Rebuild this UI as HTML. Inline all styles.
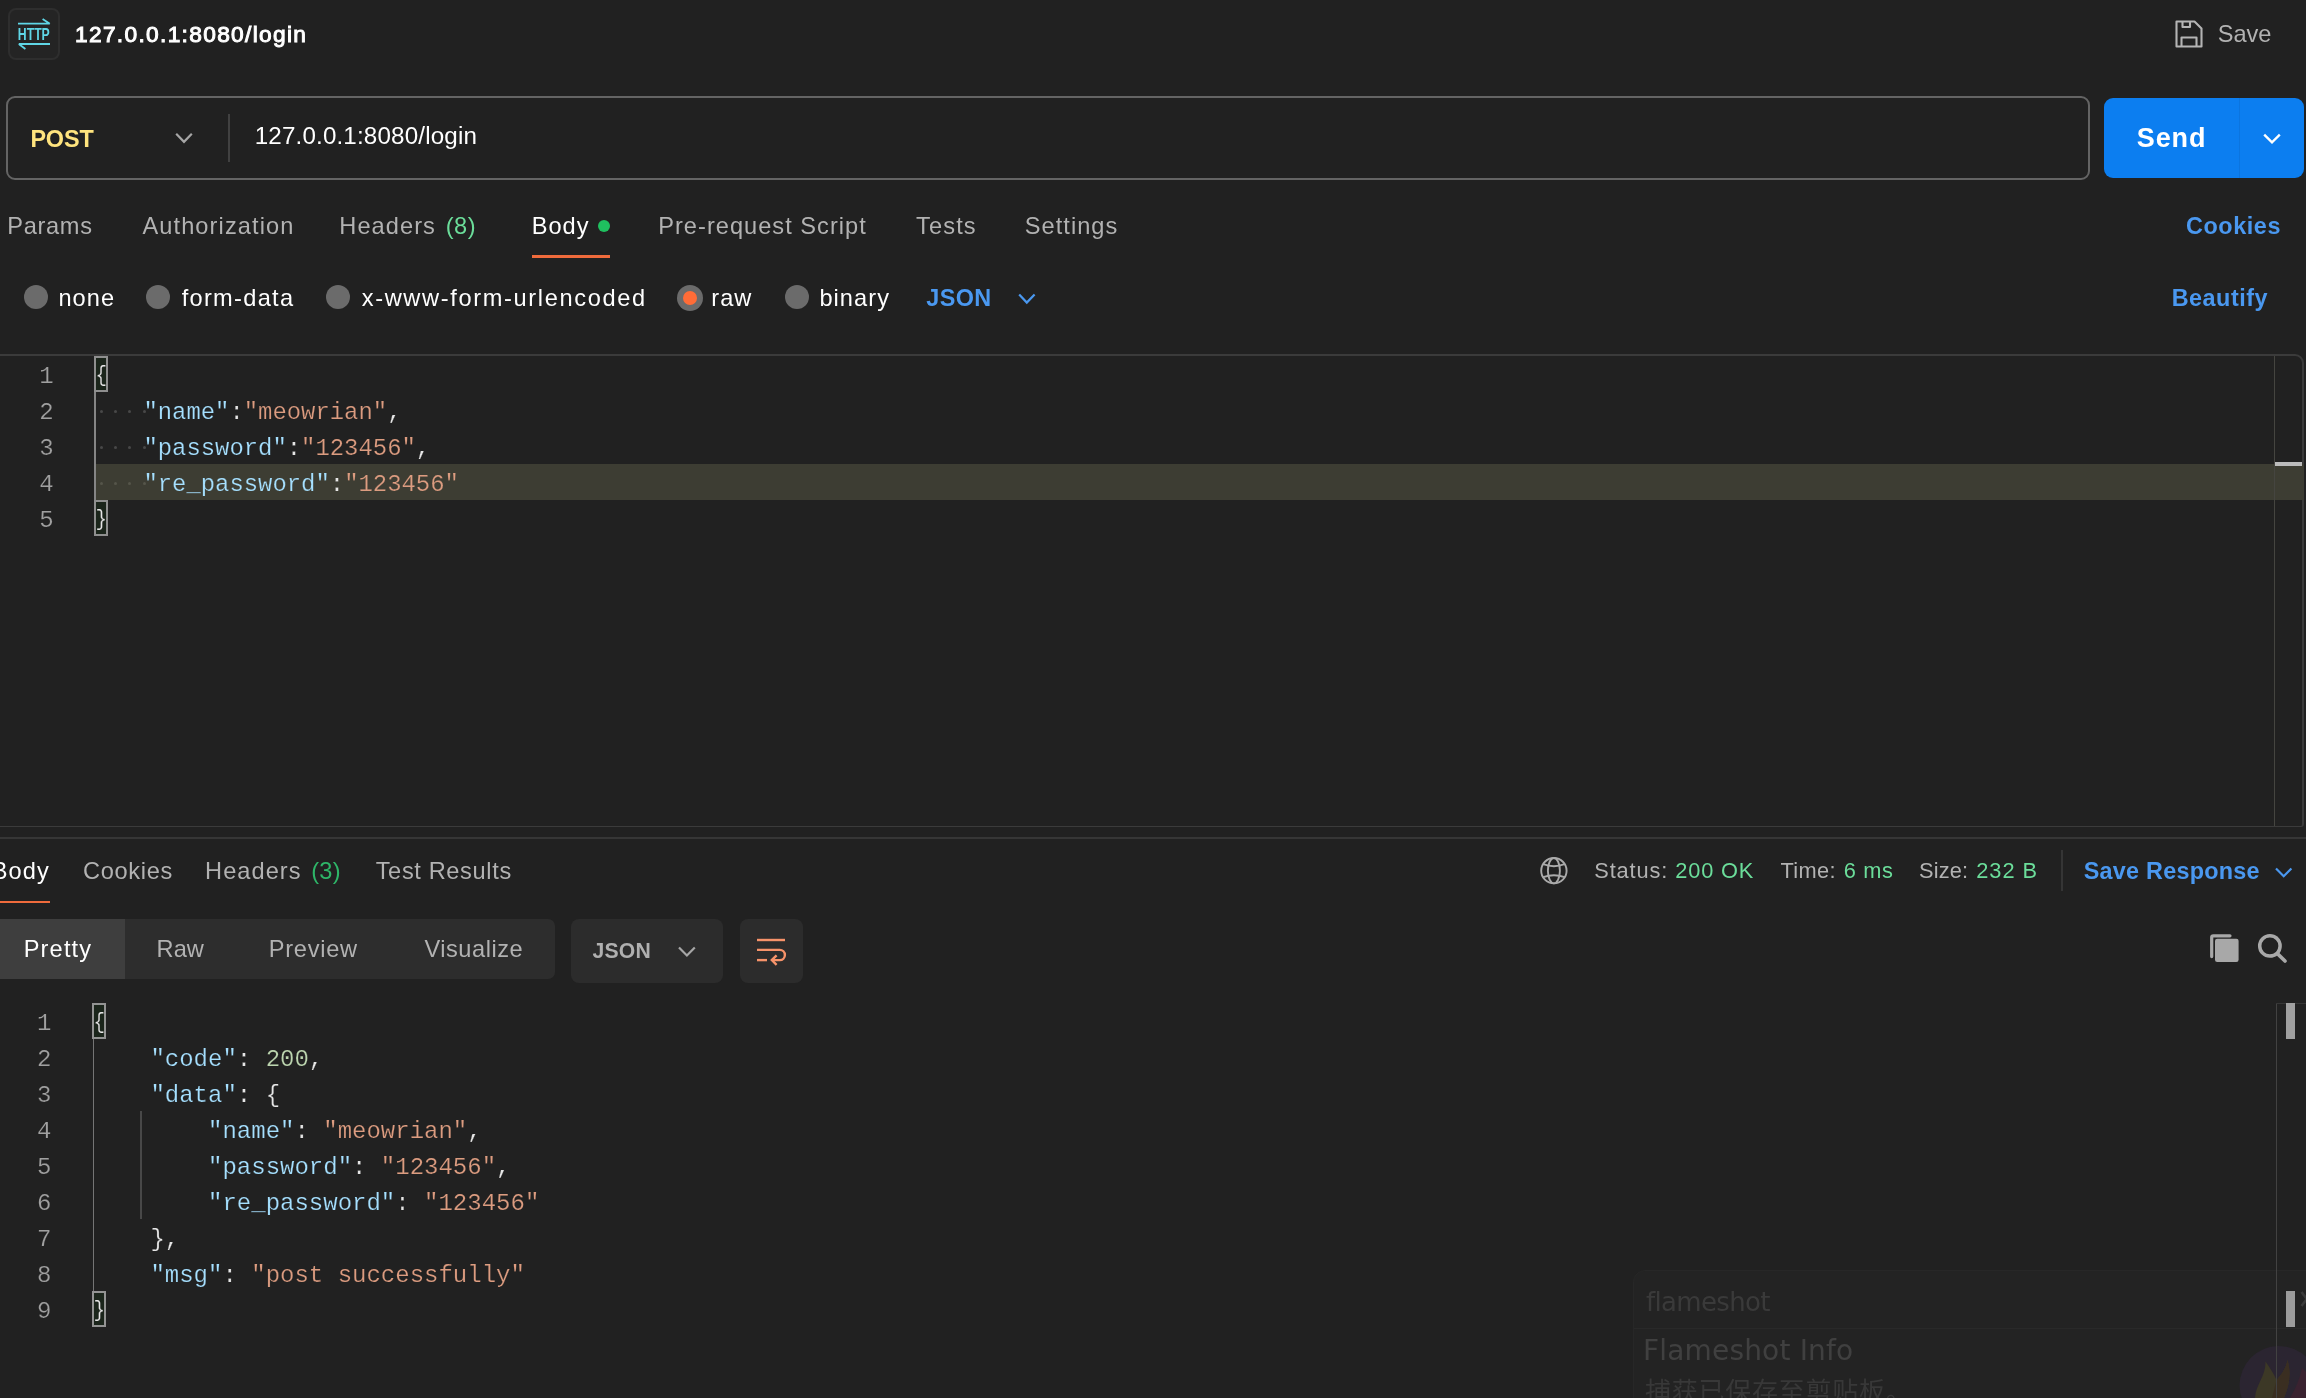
<!DOCTYPE html>
<html lang="en">
<head>
<meta charset="utf-8">
<title>Postman - 127.0.0.1:8080/login</title>
<style>
*{box-sizing:border-box;margin:0;padding:0}
html,body{width:2306px;height:1398px;overflow:hidden;background:#212121}
body{position:relative;font-family:'Liberation Sans',sans-serif;color:#fff}
.a{position:absolute}
.t{position:absolute;white-space:pre}
.m{position:absolute;white-space:pre;font:24px/24px 'Liberation Mono',monospace;color:#e6e6e6;-webkit-text-stroke:.22px #212121}
.ln{position:absolute;white-space:pre;font:24px/24px 'Liberation Mono',monospace;color:#a0a0a0;text-align:right;-webkit-text-stroke:.22px #212121}
.br{transform:translateY(-1.3px) scale(.8,.93);transform-origin:50% 62%}
.rq{font-size:23.9px}
.k{color:#a6e0ff}.s{color:#dc9c80}.n{color:#bdd6b0}
.hl,.hl span{-webkit-text-stroke-color:#3d3d33}
.radio{position:absolute;width:24px;height:24px;border-radius:50%;background:#6b6b6b}
.dot{position:absolute;width:3px;height:3px;border-radius:50%;background:#484848}
svg{position:absolute;overflow:visible}
</style>
</head>
<body>
<div id="root" style="position:absolute;left:0;top:0;width:2306px;height:1398px;will-change:transform">

<!-- ===== header ===== -->
<div class="a" style="left:8px;top:8px;width:52.4px;height:52.4px;border-radius:8px;background:#242424;border:2.2px solid #2e2e2e"></div>
<svg style="left:8px;top:8px" width="52" height="52" viewBox="8 8 52 52">
  <g fill="none" stroke="#5fd6e6" stroke-width="1.8" stroke-linecap="butt">
    <path d="M18 23.7 H49.8 M42.6 18.9 L49.8 23.7"/>
    <path d="M18.8 44 H50 M18.8 44 L25.4 49"/>
  </g>
  <text x="17.8" y="40.1" font-family="'Liberation Sans',sans-serif" font-size="17" font-weight="bold" fill="#5fd6e6" textLength="32" lengthAdjust="spacingAndGlyphs">HTTP</text>
</svg>

<!-- save icon -->
<svg style="left:2175px;top:20px" width="28" height="28" viewBox="0 0 28 28">
  <g fill="none" stroke="#b4b4b4" stroke-width="2.1" stroke-linejoin="round">
    <path d="M1.5 1.5 H19.5 L26.5 8.5 V26.5 H1.5 Z"/>
    <path d="M7.5 1.5 V7 H15 V1.5"/>
    <path d="M6.5 26.5 V17.5 H21.5 V26.5"/>
  </g>
</svg>

<!-- ===== URL bar ===== -->
<div class="a" style="left:6px;top:96px;width:2084px;height:84px;border:2px solid #646464;border-radius:9px"></div>
<svg style="left:175px;top:132px" width="18" height="12" viewBox="0 0 18 12"><path d="M1.2 1.8 L9 9.8 L16.8 1.8" fill="none" stroke="#a6a6a6" stroke-width="2.2"/></svg>
<div class="a" style="left:228.2px;top:114px;width:1.7px;height:48px;background:#414141"></div>

<!-- send button -->
<div class="a" style="left:2104px;top:98px;width:200px;height:80px;border-radius:9px;background:#0c7ef0"></div>
<div class="a" style="left:2239px;top:98px;width:1.3px;height:80px;background:#0b75e0"></div>
<svg style="left:2263px;top:133px" width="18" height="12" viewBox="0 0 18 12"><path d="M1.2 1.6 L9 9.4 L16.8 1.6" fill="none" stroke="#fff" stroke-width="2.4"/></svg>

<!-- ===== request tabs ===== -->
<div class="a" style="left:598px;top:220.3px;width:12px;height:12px;border-radius:50%;background:#1fc05f"></div>
<div class="a" style="left:532px;top:255.4px;width:78px;height:2.6px;background:#f06b3c"></div>

<!-- body type radios -->
<div class="radio" style="left:24px;top:285px"></div>
<div class="radio" style="left:146px;top:285px"></div>
<div class="radio" style="left:325.7px;top:285px"></div>
<div class="radio" style="left:677px;top:285.2px;width:26px;height:26px"></div>
<div class="a" style="left:683px;top:291.2px;width:14px;height:14px;border-radius:50%;background:#ff6c37"></div>
<div class="radio" style="left:784.8px;top:285px"></div>
<svg style="left:1018px;top:293px" width="18" height="12" viewBox="0 0 18 12"><path d="M1.2 1.4 L8.8 9.6 L16.6 1.4" fill="none" stroke="#4a98f0" stroke-width="2.2"/></svg>

<!-- ===== request editor ===== -->
<div class="a" style="left:-4px;top:354px;width:2308px;height:473.2px;border:2px solid #3b3b3b;border-bottom-width:1.3px;border-radius:0 9px 3px 0"></div>
<!-- current line highlight -->
<div class="a" style="left:96px;top:464.1px;width:2207.5px;height:35.7px;background:#3d3d33"></div>
<div class="a" style="left:2274px;top:356px;width:1.2px;height:470px;background:#454540"></div>
<div class="a" style="left:2275.2px;top:462.4px;width:26.6px;height:3.6px;background:#bcbcbc"></div>
<!-- bracket boxes and guide -->
<div class="a" style="left:94.2px;top:357px;width:2px;height:178px;background:#858585"></div>
<div class="a" style="left:94.2px;top:356.2px;width:13.7px;height:35.8px;border:2px solid #8f8f8f;background:#1b251b"></div>
<div class="a" style="left:94.2px;top:500.2px;width:13.7px;height:35.8px;border:2px solid #8f8f8f;background:#1b251b"></div>
<!-- whitespace dots -->
<div class="dot" style="left:99.5px;top:409.5px"></div><div class="dot" style="left:114.1px;top:409.5px"></div><div class="dot" style="left:128.4px;top:409.5px"></div><div class="dot" style="left:142.6px;top:409.5px"></div>
<div class="dot" style="left:99.5px;top:445.5px"></div><div class="dot" style="left:114.1px;top:445.5px"></div><div class="dot" style="left:128.4px;top:445.5px"></div><div class="dot" style="left:142.6px;top:445.5px"></div>
<div class="dot" style="left:99.5px;top:481.5px;background:#55554a"></div><div class="dot" style="left:114.1px;top:481.5px;background:#55554a"></div><div class="dot" style="left:128.4px;top:481.5px;background:#55554a"></div><div class="dot" style="left:142.6px;top:481.5px;background:#55554a"></div>
<!-- line numbers -->
<div class="ln" style="left:10px;width:43.6px;top:365.2px">1</div>
<div class="ln" style="left:10px;width:43.6px;top:401.2px">2</div>
<div class="ln" style="left:10px;width:43.6px;top:437.2px">3</div>
<div class="ln" style="left:10px;width:43.6px;top:473.2px">4</div>
<div class="ln" style="left:10px;width:43.6px;top:509.2px">5</div>
<!-- code -->
<div class="m br" style="left:93.8px;top:365.2px">{</div>
<div class="m rq" style="left:143.4px;top:401.2px"><span class="k">"name"</span>:<span class="s">"meowrian"</span>,</div>
<div class="m rq" style="left:143.4px;top:437.2px"><span class="k">"password"</span>:<span class="s">"123456"</span>,</div>
<div class="m rq hl" style="left:143.4px;top:473.2px"><span class="k">"re_password"</span>:<span class="s">"123456"</span></div>
<div class="m br" style="left:93.8px;top:509.2px">}</div>

<!-- ===== response pane ===== -->
<div class="a" style="left:0;top:837.1px;width:2306px;height:1.8px;background:#363636"></div>
<div class="a" style="left:0;top:900.6px;width:49.8px;height:2.7px;background:#f06b3c"></div>

<!-- globe -->
<svg style="left:1539px;top:856px" width="30" height="30" viewBox="0 0 30 30">
  <g fill="none" stroke="#aaaaaa" stroke-width="1.9">
    <circle cx="14.9" cy="14.7" r="12.7"/>
    <ellipse cx="14.9" cy="14.7" rx="6" ry="12.7"/>
    <path d="M4.2 8.2 Q14.9 12.2 25.6 8.2 M4.2 21.2 Q14.9 17.2 25.6 21.2"/>
  </g>
</svg>
<div class="a" style="left:2061px;top:850px;width:1.6px;height:41px;background:#353535"></div>
<svg style="left:2275px;top:866.5px" width="18" height="12" viewBox="0 0 18 12"><path d="M1 1.4 L8.7 9.2 L16.4 1.4" fill="none" stroke="#4a98f0" stroke-width="2.2"/></svg>

<!-- view tabs -->
<div class="a" style="left:-10px;top:919px;width:565px;height:60px;border-radius:7px;background:#2d2d2d"></div>
<div class="a" style="left:0;top:919px;width:125px;height:60px;background:#3e3e3e"></div>
<div class="a" style="left:571px;top:919px;width:152.4px;height:64.4px;border-radius:8px;background:#2c2c2c"></div>
<svg style="left:678px;top:946px" width="18" height="12" viewBox="0 0 18 12"><path d="M1 1.4 L8.9 9.4 L16.8 1.4" fill="none" stroke="#a6a6a6" stroke-width="2.2"/></svg>
<div class="a" style="left:739.6px;top:919px;width:63.4px;height:64.4px;border-radius:8px;background:#2c2c2c"></div>
<svg style="left:755px;top:936px" width="34" height="32" viewBox="755 936 34 32">
  <g fill="none" stroke="#f7936a" stroke-width="2.4">
    <path d="M757 940 H785"/>
    <path d="M757 949.9 H779.8 A5.1 5.1 0 0 1 779.8 960.1 H773"/>
    <path d="M757 960.1 H767"/>
    <path d="M776.6 955.3 L771.8 960.1 L776.6 964.9"/>
  </g>
</svg>

<!-- copy + search -->
<svg style="left:2208px;top:932px" width="32" height="32" viewBox="2208 932 32 32">
  <path d="M2230 935.8 H2213.4 Q2211.7 935.8 2211.7 937.5 V956.6" fill="none" stroke="#a8a8a8" stroke-width="3.2" stroke-linecap="round"/>
  <rect x="2215" y="938.8" width="23.6" height="23.2" rx="2.2" fill="#a8a8a8"/>
</svg>
<svg style="left:2256px;top:932px" width="32" height="32" viewBox="2256 932 32 32">
  <circle cx="2269.9" cy="945.9" r="10.2" fill="none" stroke="#a8a8a8" stroke-width="3.5"/>
  <path d="M2277.4 953.6 L2285 961" stroke="#a8a8a8" stroke-width="3.6" stroke-linecap="round"/>
</svg>

<!-- flameshot notification (faded) -->
<div class="a" style="left:1633px;top:1270px;width:700px;height:160px;border-radius:12px;background:#232323;border:1px solid #272727"></div>
<div class="a" style="left:1634px;top:1328.2px;width:672px;height:1.2px;background:#292929"></div>
<svg style="left:2239px;top:1346px" width="80" height="80" viewBox="2239 1346 80 80">
  <circle cx="2279" cy="1385.5" r="39.5" fill="#2b2531"/>
  <path d="M2255 1398 C2256 1384 2266 1376 2265.5 1361.5 C2270 1368 2274 1374 2276.5 1380 C2282 1374 2286 1368 2287.5 1360 C2291 1372 2290 1384 2284 1398 Z" fill="#3c3826"/>
  <path d="M2276.5 1380 C2282 1374 2286 1368 2287.5 1360 C2291 1372 2290 1384 2284 1398 H2272 Z" fill="#3a2e21"/>
  <path d="M2290 1398 C2296 1388 2300 1378 2302 1368 L2306 1372 V1398 Z" fill="#3a2230"/>
</svg>
<svg style="left:2300px;top:1290px" width="10" height="18" viewBox="2300 1290 10 18"><path d="M2301.5 1292 L2312 1306 M2301.5 1306 L2312 1292" stroke="#3a3a3a" stroke-width="2.6" fill="none"/></svg>

<!-- response editor -->
<div class="a" style="left:2276px;top:1002.6px;width:1.2px;height:400px;background:#424242"></div>
<div class="a" style="left:2276px;top:1002.6px;width:30px;height:1px;background:#363636"></div>
<div class="a" style="left:2286px;top:1003.2px;width:9.2px;height:36px;background:#a0a0a0"></div>
<div class="a" style="left:2286px;top:1291px;width:9.3px;height:36.2px;background:#9c9c9c"></div>
<div class="a" style="left:92.8px;top:1004px;width:1.4px;height:322px;background:#757575"></div>
<div class="a" style="left:140.4px;top:1111px;width:1.4px;height:108px;background:#484848"></div>
<div class="a" style="left:92.2px;top:1003.3px;width:13.8px;height:35.4px;border:2px solid #939393;background:#1b251b"></div>
<div class="a" style="left:92.2px;top:1291.3px;width:13.8px;height:35.6px;border:2px solid #939393;background:#1b251b"></div>

<div class="ln" style="left:8px;width:43.4px;top:1012.0px">1</div>
<div class="ln" style="left:8px;width:43.4px;top:1048.0px">2</div>
<div class="ln" style="left:8px;width:43.4px;top:1084.0px">3</div>
<div class="ln" style="left:8px;width:43.4px;top:1120.0px">4</div>
<div class="ln" style="left:8px;width:43.4px;top:1156.0px">5</div>
<div class="ln" style="left:8px;width:43.4px;top:1192.0px">6</div>
<div class="ln" style="left:8px;width:43.4px;top:1228.0px">7</div>
<div class="ln" style="left:8px;width:43.4px;top:1264.0px">8</div>
<div class="ln" style="left:8px;width:43.4px;top:1300.0px">9</div>

<div class="m br" style="left:92px;top:1012.0px">{</div>
<div class="m" style="left:92.8px;top:1048.0px">    <span class="k">"code"</span>: <span class="n">200</span>,</div>
<div class="m" style="left:92.8px;top:1084.0px">    <span class="k">"data"</span>: {</div>
<div class="m" style="left:92.8px;top:1120.0px">        <span class="k">"name"</span>: <span class="s">"meowrian"</span>,</div>
<div class="m" style="left:92.8px;top:1156.0px">        <span class="k">"password"</span>: <span class="s">"123456"</span>,</div>
<div class="m" style="left:92.8px;top:1192.0px">        <span class="k">"re_password"</span>: <span class="s">"123456"</span></div>
<div class="m" style="left:92.8px;top:1228.0px">    },</div>
<div class="m" style="left:92.8px;top:1264.0px">    <span class="k">"msg"</span>: <span class="s">"post successfully"</span></div>
<div class="m br" style="left:92px;top:1300.0px">}</div>

<!-- ===== text ===== -->
<span class="t" style="left:75.0px;top:23.0px;font:400 22.7px/22.7px 'Liberation Sans', sans-serif;letter-spacing:1.332px;color:#ffffff;-webkit-text-stroke:1.0px #ffffff">127.0.0.1:8080/login</span>
<span class="t" style="left:2217.7px;top:22.5px;font:400 23.6px/23.6px 'Liberation Sans', sans-serif;letter-spacing:0.000px;color:#b2b2b2">Save</span>
<span class="t" style="left:30.4px;top:127.6px;font:700 23.4px/23.4px 'Liberation Sans', sans-serif;letter-spacing:-0.133px;color:#ffe47e">POST</span>
<span class="t" style="left:254.7px;top:123.7px;font:400 24.2px/24.2px 'Liberation Sans', sans-serif;letter-spacing:0.158px;color:#ffffff">127.0.0.1:8080/login</span>
<span class="t" style="left:2136.7px;top:125.4px;font:700 27px/27px 'Liberation Sans', sans-serif;letter-spacing:0.933px;color:#ffffff">Send</span>
<span class="t" style="left:7.3px;top:215.0px;font:400 23.6px/23.6px 'Liberation Sans', sans-serif;letter-spacing:0.680px;color:#b2b2b2">Params</span>
<span class="t" style="left:142.4px;top:215.0px;font:400 23.6px/23.6px 'Liberation Sans', sans-serif;letter-spacing:1.108px;color:#b2b2b2">Authorization</span>
<span class="t" style="left:339.3px;top:215.0px;font:400 23.6px/23.6px 'Liberation Sans', sans-serif;letter-spacing:1.067px;color:#b2b2b2">Headers</span>
<span class="t" style="left:445.7px;top:215.0px;font:400 23.6px/23.6px 'Liberation Sans', sans-serif;letter-spacing:0.500px;color:#6bdd9a">(8)</span>
<span class="t" style="left:531.7px;top:215.0px;font:400 23.6px/23.6px 'Liberation Sans', sans-serif;letter-spacing:1.000px;color:#ffffff">Body</span>
<span class="t" style="left:658.2px;top:215.0px;font:400 23.6px/23.6px 'Liberation Sans', sans-serif;letter-spacing:1.029px;color:#b2b2b2">Pre-request Script</span>
<span class="t" style="left:916.0px;top:215.0px;font:400 23.6px/23.6px 'Liberation Sans', sans-serif;letter-spacing:1.150px;color:#b2b2b2">Tests</span>
<span class="t" style="left:1024.7px;top:215.0px;font:400 23.6px/23.6px 'Liberation Sans', sans-serif;letter-spacing:1.057px;color:#b2b2b2">Settings</span>
<span class="t" style="left:2186.0px;top:214.9px;font:700 23.4px/23.4px 'Liberation Sans', sans-serif;letter-spacing:0.567px;color:#4a98f0">Cookies</span>
<span class="t" style="left:58.4px;top:286.6px;font:400 23.6px/23.6px 'Liberation Sans', sans-serif;letter-spacing:1.100px;color:#ffffff">none</span>
<span class="t" style="left:181.7px;top:286.6px;font:400 23.6px/23.6px 'Liberation Sans', sans-serif;letter-spacing:1.300px;color:#ffffff">form-data</span>
<span class="t" style="left:361.7px;top:286.6px;font:400 23.6px/23.6px 'Liberation Sans', sans-serif;letter-spacing:1.650px;color:#ffffff">x-www-form-urlencoded</span>
<span class="t" style="left:711.3px;top:286.6px;font:400 23.6px/23.6px 'Liberation Sans', sans-serif;letter-spacing:1.000px;color:#ffffff">raw</span>
<span class="t" style="left:819.4px;top:286.6px;font:400 23.6px/23.6px 'Liberation Sans', sans-serif;letter-spacing:1.060px;color:#ffffff">binary</span>
<span class="t" style="left:926.3px;top:286.6px;font:700 23.4px/23.4px 'Liberation Sans', sans-serif;letter-spacing:0.367px;color:#4a98f0">JSON</span>
<span class="t" style="left:2171.7px;top:287.4px;font:700 23.4px/23.4px 'Liberation Sans', sans-serif;letter-spacing:0.500px;color:#4a98f0">Beautify</span>
<span class="t" style="left:-8.3px;top:859.6px;font:400 23.6px/23.6px 'Liberation Sans', sans-serif;letter-spacing:1.100px;color:#ffffff">Body</span>
<span class="t" style="left:83.0px;top:859.6px;font:400 23.6px/23.6px 'Liberation Sans', sans-serif;letter-spacing:0.683px;color:#b2b2b2">Cookies</span>
<span class="t" style="left:205.1px;top:859.6px;font:400 23.6px/23.6px 'Liberation Sans', sans-serif;letter-spacing:1.033px;color:#b2b2b2">Headers</span>
<span class="t" style="left:311.3px;top:859.6px;font:400 23.6px/23.6px 'Liberation Sans', sans-serif;letter-spacing:0.200px;color:#2eb568">(3)</span>
<span class="t" style="left:375.7px;top:859.6px;font:400 23.6px/23.6px 'Liberation Sans', sans-serif;letter-spacing:0.636px;color:#b2b2b2">Test Results</span>
<span class="t" style="left:1594.3px;top:860.2px;font:400 21.8px/21.8px 'Liberation Sans', sans-serif;letter-spacing:0.850px;color:#b2b2b2">Status:</span>
<span class="t" style="left:1675.3px;top:860.2px;font:400 21.8px/21.8px 'Liberation Sans', sans-serif;letter-spacing:0.840px;color:#6bdd9a">200 OK</span>
<span class="t" style="left:1780.4px;top:860.2px;font:400 21.8px/21.8px 'Liberation Sans', sans-serif;letter-spacing:0.400px;color:#b2b2b2">Time:</span>
<span class="t" style="left:1843.7px;top:860.2px;font:400 21.8px/21.8px 'Liberation Sans', sans-serif;letter-spacing:0.667px;color:#6bdd9a">6 ms</span>
<span class="t" style="left:1919.1px;top:860.2px;font:400 21.8px/21.8px 'Liberation Sans', sans-serif;letter-spacing:0.150px;color:#b2b2b2">Size:</span>
<span class="t" style="left:1976.3px;top:860.2px;font:400 21.8px/21.8px 'Liberation Sans', sans-serif;letter-spacing:0.950px;color:#6bdd9a">232 B</span>
<span class="t" style="left:2083.7px;top:859.5px;font:700 23.4px/23.4px 'Liberation Sans', sans-serif;letter-spacing:0.250px;color:#4a98f0">Save Response</span>
<span class="t" style="left:23.7px;top:937.8px;font:400 23.6px/23.6px 'Liberation Sans', sans-serif;letter-spacing:1.160px;color:#ffffff">Pretty</span>
<span class="t" style="left:156.5px;top:937.8px;font:400 23.6px/23.6px 'Liberation Sans', sans-serif;letter-spacing:0.100px;color:#b2b2b2">Raw</span>
<span class="t" style="left:268.7px;top:937.8px;font:400 23.6px/23.6px 'Liberation Sans', sans-serif;letter-spacing:0.750px;color:#b2b2b2">Preview</span>
<span class="t" style="left:424.4px;top:937.8px;font:400 23.6px/23.6px 'Liberation Sans', sans-serif;letter-spacing:0.538px;color:#b2b2b2">Visualize</span>
<span class="t" style="left:592.5px;top:939.9px;font:700 21.2px/21.2px 'Liberation Sans', sans-serif;letter-spacing:0.167px;color:#b0b0b0">JSON</span>
<span class="t" style="left:1646.0px;top:1288.6px;font:400 26.0px/26.0px 'DejaVu Sans', 'Liberation Sans', sans-serif;letter-spacing:-0.662px;color:#3a3a3a">flameshot</span>
<span class="t" style="left:1643.0px;top:1337.1px;font:400 28.0px/28.0px 'DejaVu Sans', 'Liberation Sans', sans-serif;letter-spacing:0.177px;color:#404040">Flameshot Info</span>
<span class="t" style="left:1645.0px;top:1378.8px;font:400 26.0px/26.0px 'Liberation Sans', 'Noto Sans CJK SC', sans-serif;letter-spacing:0.744px;color:#383838">捕获已保存至剪贴板。</span>

</div>
</body>
</html>
